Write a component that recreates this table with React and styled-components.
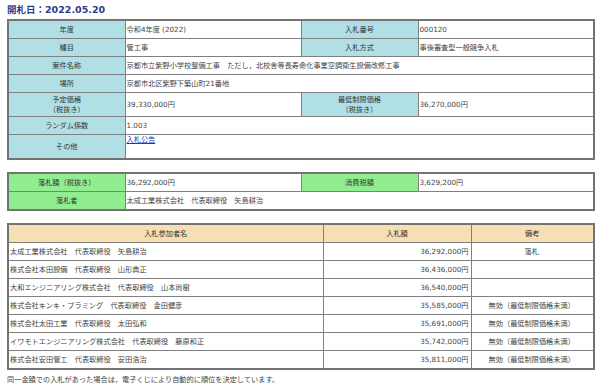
import styled, { createGlobalStyle } from 'styled-components';

const GlobalStyle = createGlobalStyle`
  html, body {
    margin: 0;
    padding: 0;
    background: #ffffff;
  }
  body {
    font-family: 'DejaVu Sans', 'Noto Sans CJK JP', sans-serif;
    color: #444444;
  }
`;

const info = {
  year: '令和4年度 (2022)',
  number: '000120',
  kind: '管工事',
  method: '事後審査型一般競争入札',
  name: '京都市立紫野小学校整備工事　ただし，北校舎等長寿命化事業空調衛生設備改修工事',
  place: '京都市北区紫野下築山町21番地',
  planned: '39,330,000円',
  minimum: '36,270,000円',
  random: '1.003',
};

const bidders = [
  { name: '太成工業株式会社　代表取締役　矢島耕治', amount: '36,292,000円', note: '落札' },
  { name: '株式会社本田設備　代表取締役　山形典正', amount: '36,436,000円', note: '' },
  { name: '大和エンジニアリング株式会社　代表取締役　山本尚樹', amount: '36,540,000円', note: '' },
  { name: '株式会社キンキ・プラミング　代表取締役　金田健彦', amount: '35,585,000円', note: '無効（最低制限価格未満）' },
  { name: '株式会社太田工業　代表取締役　太田弘和', amount: '35,691,000円', note: '無効（最低制限価格未満）' },
  { name: 'イワモトエンジニアリング株式会社　代表取締役　藤原和正', amount: '35,742,000円', note: '無効（最低制限価格未満）' },
  { name: '株式会社安田管工　代表取締役　安田浩治', amount: '35,811,000円', note: '無効（最低制限価格未満）' },
];

const labelColors = {
  blue: '#b0e0e6',
  green: '#90ee90',
  wheat: '#f8deb4',
};

const App = () => {
  return (
    <>
      <GlobalStyle />
      <StPage>
        <StTitle>開札日：2022.05.20</StTitle>

        <StTable>
          <colgroup>
            <col style={{ width: 117 }} />
            <col style={{ width: 176 }} />
            <col style={{ width: 117 }} />
            <col style={{ width: 176 }} />
          </colgroup>
          <tbody>
            <tr>
              <StLabel $tone='blue'>年度</StLabel>
              <StValue>{info.year}</StValue>
              <StLabel $tone='blue'>入札番号</StLabel>
              <StValue>{info.number}</StValue>
            </tr>
            <tr>
              <StLabel $tone='blue'>種目</StLabel>
              <StValue>{info.kind}</StValue>
              <StLabel $tone='blue'>入札方式</StLabel>
              <StValue>{info.method}</StValue>
            </tr>
            <tr>
              <StLabel $tone='blue'>案件名称</StLabel>
              <StValue colSpan={3}>{info.name}</StValue>
            </tr>
            <tr>
              <StLabel $tone='blue'>場所</StLabel>
              <StValue colSpan={3}>{info.place}</StValue>
            </tr>
            <tr>
              <StLabel $tone='blue' $tall>
                予定価格
                <br />
                （税抜き）
              </StLabel>
              <StValue>{info.planned}</StValue>
              <StLabel $tone='blue'>
                最低制限価格
                <br />
                （税抜き）
              </StLabel>
              <StValue>{info.minimum}</StValue>
            </tr>
            <tr>
              <StLabel $tone='blue'>ランダム係数</StLabel>
              <StValue colSpan={3}>{info.random}</StValue>
            </tr>
            <tr>
              <StLabel $tone='blue' $tall>その他</StLabel>
              <StValue colSpan={3} $top>
                <StLink href='#'>入札公告</StLink>
              </StValue>
            </tr>
          </tbody>
        </StTable>

        <StTable>
          <colgroup>
            <col style={{ width: 117 }} />
            <col style={{ width: 176 }} />
            <col style={{ width: 117 }} />
            <col style={{ width: 176 }} />
          </colgroup>
          <tbody>
            <tr>
              <StLabel $tone='green'>落札額（税抜き）</StLabel>
              <StValue>36,292,000円</StValue>
              <StLabel $tone='green'>消費税額</StLabel>
              <StValue>3,629,200円</StValue>
            </tr>
            <tr>
              <StLabel $tone='green'>落札者</StLabel>
              <StValue colSpan={3}>太成工業株式会社　代表取締役　矢島耕治</StValue>
            </tr>
          </tbody>
        </StTable>

        <StTable>
          <colgroup>
            <col style={{ width: 315 }} />
            <col style={{ width: 148 }} />
            <col style={{ width: 123 }} />
          </colgroup>
          <thead>
            <tr>
              <StLabel $tone='wheat'>入札参加者名</StLabel>
              <StLabel $tone='wheat'>入札額</StLabel>
              <StLabel $tone='wheat'>備考</StLabel>
            </tr>
          </thead>
          <tbody>
            {bidders.map((b) => (
              <tr key={b.name}>
                <StValue>{b.name}</StValue>
                <StValue $align='right'>{b.amount}</StValue>
                <StValue $align='center'>{b.note}</StValue>
              </tr>
            ))}
          </tbody>
        </StTable>

        <StNote>同一金額での入札があった場合は，電子くじにより自動的に順位を決定しています。</StNote>
      </StPage>
    </>
  );
};

export default App;

const StPage = styled.div`
  width: 586px;
  padding: 2px 7px 0;

  display: flex;
  flex-direction: column;
  row-gap: 12px;
`;

const StTitle = styled.h1`
  margin: 0 0 -10px;
  height: 15px;

  color: #2c3a8c;
  font-family: 'DejaVu Sans', 'Noto Sans CJK JP', sans-serif;
  font-size: 9.5px;
  font-weight: 700;
  line-height: 15px;
`;

const StTable = styled.table`
  width: 586px;
  table-layout: fixed;
  border-collapse: collapse;
  border: 2px solid #737373;

  font-size: 7.2px;
  line-height: 10px;
`;

const StLabel = styled.th`
  height: ${({ $tall }) => ($tall ? '23px' : '17px')};
  padding: 0 2px;

  border: 1px solid #808080;
  background: ${({ $tone }) => labelColors[$tone]};

  color: #333333;
  font-weight: 400;
  text-align: center;
  vertical-align: middle;
  white-space: nowrap;
`;

const StValue = styled.td`
  height: 17px;
  padding: 0 2px 0 1px;

  border: 1px solid #808080;
  background: #ffffff;

  color: #444444;
  text-align: ${({ $align }) => $align || 'left'};
  vertical-align: ${({ $top }) => ($top ? 'top' : 'middle')};
  white-space: nowrap;
  overflow: hidden;
`;

const StLink = styled.a`
  color: #2233cc;
  text-decoration: underline;
`;

const StNote = styled.p`
  margin: -7px 0 0;

  color: #444444;
  font-size: 7.2px;
  line-height: 10px;
`;
